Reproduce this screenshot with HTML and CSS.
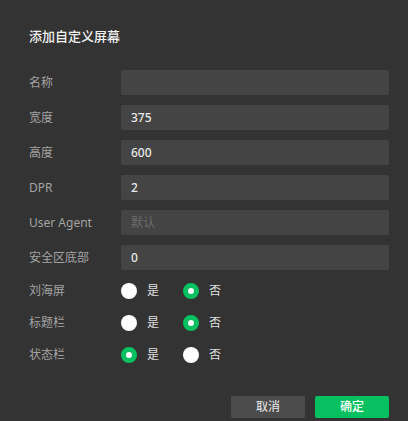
FILE: index.html
```html
<!DOCTYPE html>
<html lang="zh">
<head>
<meta charset="utf-8">
<link rel="stylesheet" href="styles.css">
</head>
<body>
<div class="dialog">
  <div class="title">添加自定义屏幕</div>
  <div class="form">
    <div class="row"><span class="label">名称</span><div class="input"></div></div>
    <div class="row"><span class="label">宽度</span><div class="input">375</div></div>
    <div class="row"><span class="label">高度</span><div class="input">600</div></div>
    <div class="row"><span class="label">DPR</span><div class="input">2</div></div>
    <div class="row"><span class="label">User Agent</span><div class="input placeholder">默认</div></div>
    <div class="row"><span class="label">安全区底部</span><div class="input">0</div></div>
  </div>
  <div class="radios">
    <div class="rrow"><span class="label">刘海屏</span>
      <div class="group">
        <span class="opt"><span class="radio"></span><span class="otext">是</span></span>
        <span class="opt"><span class="radio on"></span><span class="otext">否</span></span>
      </div>
    </div>
    <div class="rrow"><span class="label">标题栏</span>
      <div class="group">
        <span class="opt"><span class="radio"></span><span class="otext">是</span></span>
        <span class="opt"><span class="radio on"></span><span class="otext">否</span></span>
      </div>
    </div>
    <div class="rrow"><span class="label">状态栏</span>
      <div class="group">
        <span class="opt"><span class="radio on"></span><span class="otext">是</span></span>
        <span class="opt"><span class="radio"></span><span class="otext">否</span></span>
      </div>
    </div>
  </div>
  <div class="actions">
    <button class="btn cancel">取消</button>
    <button class="btn ok">确定</button>
  </div>
</div>
</body>
</html>
```
FILE: styles.css
```css
html, body {
  margin: 0;
  padding: 0;
  background: #333333;
  width: 408px;
  height: 421px;
  overflow: hidden;
}
body {
  font-family: "Noto Sans", "Noto Sans CJK SC", sans-serif;
  color: #a6a6a6;
}
.dialog {
  padding: 27px 19px 0 29px;
}
.title {
  font-size: 13px;
  line-height: 19px;
  color: #f0f0f0;
  font-weight: 500;
}
.form {
  margin-top: 24px;
  display: flex;
  flex-direction: column;
  gap: 10px;
}
.row, .rrow {
  display: grid;
  grid-template-columns: 92px 268px;
  align-items: center;
}
.label {
  font-size: 12px;
  color: #a3a3a3;
  line-height: 16px;
}
.input {
  height: 25px;
  box-sizing: border-box;
  background: #444444;
  border-radius: 2px;
  padding-left: 10px;
  font-size: 12px;
  line-height: 25px;
  color: #e8e8e8;
  font-weight: 500;
}
.input.placeholder {
  color: #6b6b6b;
  font-weight: 400;
}
.radios {
  margin-top: 11px;
  display: flex;
  flex-direction: column;
  gap: 12px;
}
.rrow {
  height: 20px;
}
.group {
  display: flex;
  align-items: center;
  gap: 24px;
}
.opt {
  display: flex;
  align-items: center;
  gap: 10px;
}
.radio {
  width: 16px;
  height: 16px;
  border-radius: 50%;
  background: #ffffff;
  box-sizing: border-box;
}
.radio.on {
  background: #ffffff;
  border: 5px solid #07c160;
}
.otext {
  font-size: 12px;
  color: #e0e0e0;
  line-height: 16px;
}
.actions {
  margin-top: 31px;
  display: flex;
  justify-content: flex-end;
  gap: 10px;
}
.btn {
  width: 74px;
  height: 22px;
  border: none;
  border-radius: 2px;
  font-family: "Noto Sans", "Noto Sans CJK SC", sans-serif;
  font-size: 12px;
  padding: 0;
  line-height: 22px;
  font-weight: 500;
}
.cancel {
  background: #4c4c4c;
  color: #d8d8d8;
}
.ok {
  background: #07c160;
  color: #ffffff;
}
```
